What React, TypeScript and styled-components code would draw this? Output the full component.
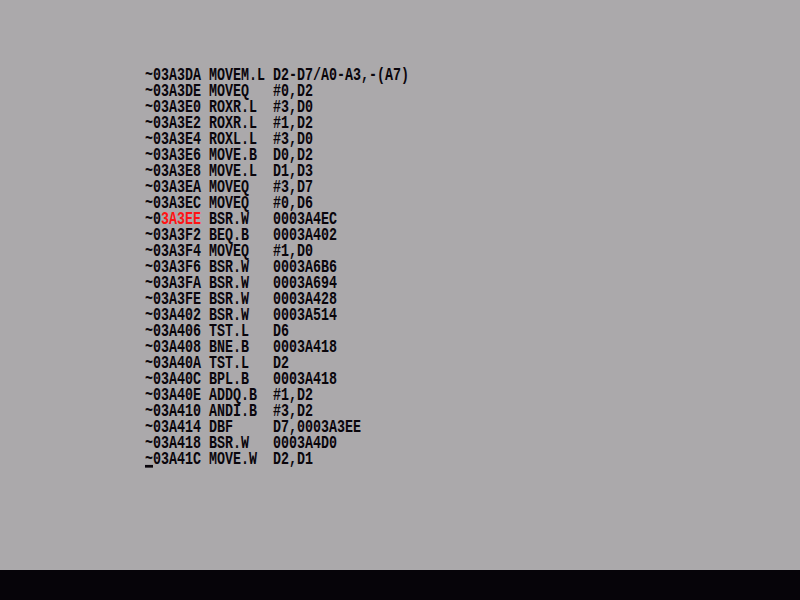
import React from "react";
import styled, { createGlobalStyle } from "styled-components";

const Global = createGlobalStyle`
  html, body { margin: 0; padding: 0; background: #aba9ab; }
  #root { width: 800px; height: 600px; }
`;

const Screen = styled.div`
  width: 800px;
  height: 600px;
  display: flex;
  flex-direction: column;
  background: #aba9ab;
  overflow: hidden;
`;

const Display = styled.div`
  flex: 1;
  padding: 67px 0 0 145px;
  display: flex;
  flex-direction: column;
`;

const Line = styled.div`
  height: 16px;
  line-height: 16px;
  white-space: pre;
  font-family: "Liberation Mono", "DejaVu Sans Mono", monospace;
  font-weight: bold;
  font-size: 13.33px;
  color: #0a060c;
`;

const Glyphs = styled.span`
  display: inline-block;
  line-height: 11px;
  transform: scaleY(1.36);
  transform-origin: 0 4.66px;
`;

const Hi = styled.span`
  color: #ff1414;
`;

const Cursor = styled.span`
  position: relative;
  &::after {
    content: "";
    position: absolute;
    left: 0;
    width: 8px;
    bottom: 1px;
    height: 2px;
    background: #0a060c;
  }
`;

const Bar = styled.div`
  height: 30px;
  background: #060409;
`;

const lines: string[] = [
  "~03A3DA MOVEM.L D2-D7/A0-A3,-(A7)",
  "~03A3DE MOVEQ   #0,D2",
  "~03A3E0 ROXR.L  #3,D0",
  "~03A3E2 ROXR.L  #1,D2",
  "~03A3E4 ROXL.L  #3,D0",
  "~03A3E6 MOVE.B  D0,D2",
  "~03A3E8 MOVE.L  D1,D3",
  "~03A3EA MOVEQ   #3,D7",
  "~03A3EC MOVEQ   #0,D6",
  "~03A3EE BSR.W   0003A4EC",
  "~03A3F2 BEQ.B   0003A402",
  "~03A3F4 MOVEQ   #1,D0",
  "~03A3F6 BSR.W   0003A6B6",
  "~03A3FA BSR.W   0003A694",
  "~03A3FE BSR.W   0003A428",
  "~03A402 BSR.W   0003A514",
  "~03A406 TST.L   D6",
  "~03A408 BNE.B   0003A418",
  "~03A40A TST.L   D2",
  "~03A40C BPL.B   0003A418",
  "~03A40E ADDQ.B  #1,D2",
  "~03A410 ANDI.B  #3,D2",
  "~03A414 DBF     D7,0003A3EE",
  "~03A418 BSR.W   0003A4D0",
  "~03A41C MOVE.W  D2,D1",
];

export default function App() {
  return (
    <>
      <Global />
      <Screen>
        <Display>
          {lines.map((l, i) => {
            if (i === 9) {
              return (
                <Line key={i}>
                  <Glyphs>
                    {"~0"}
                    <Hi>3A3EE</Hi>
                    {l.slice(7)}
                  </Glyphs>
                </Line>
              );
            }
            if (i === lines.length - 1) {
              return (
                <Line key={i}>
                  <Glyphs>
                    <Cursor>~</Cursor>
                    {l.slice(1)}
                  </Glyphs>
                </Line>
              );
            }
            return (
              <Line key={i}>
                <Glyphs>{l}</Glyphs>
              </Line>
            );
          })}
        </Display>
        <Bar />
      </Screen>
    </>
  );
}
